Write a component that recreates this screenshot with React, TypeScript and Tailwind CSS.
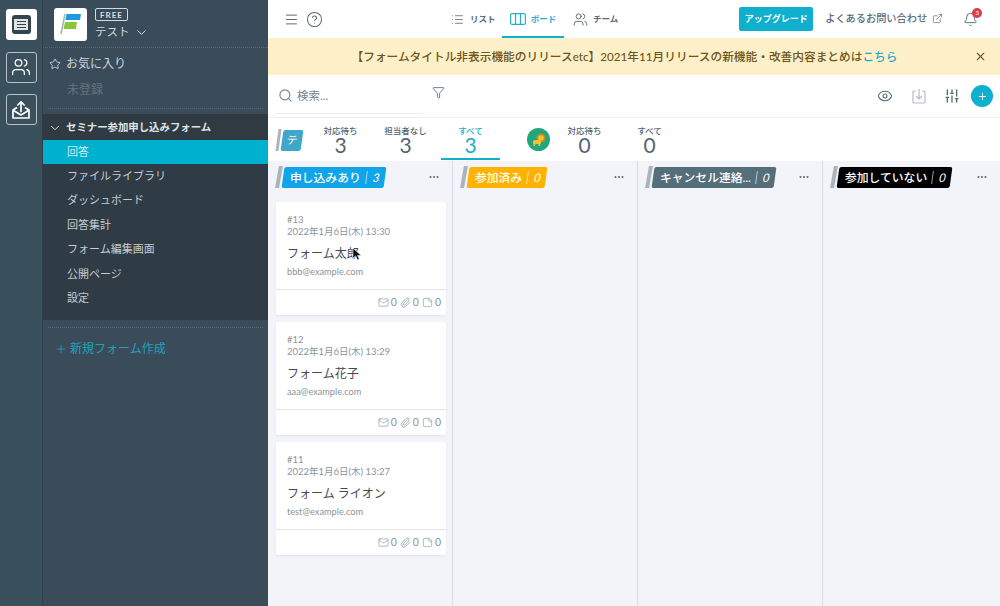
import {
  Bell,
  ChevronDown,
  CircleHelp,
  Ellipsis,
  ExternalLink,
  Eye,
  Filter,
  List,
  Mail,
  Menu,
  Paperclip,
  Plus,
  Search,
  SlidersVertical,
  Star,
  StickyNote,
  Users,
  X,
} from "lucide-react";

const fontStack = "font-['Lato','Noto_Sans_CJK_JP',sans-serif]";

function Logo() {
  return (
    <svg viewBox="0 0 33 33" className="h-[33px] w-[33px]">
      <path d="M7 26 L11 6" stroke="#a9b4ba" strokeWidth="1.6" />
      <path d="M12.5 6 H27 L26 12 H11.5 Z" fill="#1c9be0" />
      <path d="M11 14 H23 L22 21 H9.5 Z" fill="#8cc63f" />
    </svg>
  );
}

function OutboxIcon() {
  return (
    <svg viewBox="0 0 20 20" fill="none" stroke="white" strokeWidth="1.7" className="h-[20px] w-[20px]">
      <path d="M6 7.5 L2 10 V18 H18 V10 L14 7.5" strokeLinejoin="round" />
      <path d="M2.5 10.5 L10 15 L17.5 10.5" strokeLinejoin="round" />
      <path d="M10 11.5 V2 M6.8 5 L10 1.8 L13.2 5" strokeLinecap="round" strokeLinejoin="round" />
    </svg>
  );
}

function Rail() {
  return (
    <div className="flex w-[43px] shrink-0 flex-col items-center gap-[11.5px] border-r border-[#2f3d47] bg-[#3b505d] pt-[9px]">
      <div className="flex h-[31px] w-[31px] items-center justify-center rounded-[3px] bg-white">
        <div className="flex h-[19px] w-[19px] items-center justify-center rounded-[3px] bg-[#33454f]">
          <div className="flex h-[11px] w-[14px] flex-col items-center justify-center gap-[1.5px] bg-[#dfe4e7]">
            <div className="h-[1.5px] w-[9px] bg-[#33454f]" />
            <div className="h-[1.5px] w-[9px] bg-[#33454f]" />
            <div className="h-[1.5px] w-[9px] bg-[#33454f]" />
          </div>
        </div>
      </div>
      <div className="flex h-[31px] w-[31px] items-center justify-center rounded-[3px] border border-[#b8c2c8]">
        <Users size={20} strokeWidth={1.5} className="text-white" />
      </div>
      <div className="flex h-[31px] w-[31px] items-center justify-center rounded-[3px] border border-[#b8c2c8]">
        <OutboxIcon />
      </div>
    </div>
  );
}

const formItems = [
  "ファイルライブラリ",
  "ダッシュボード",
  "回答集計",
  "フォーム編集画面",
  "公開ページ",
  "設定",
];

function Sidebar() {
  return (
    <div className="flex w-[225px] shrink-0 flex-col bg-[#3a4c59]">
      <div className="flex h-[48px] shrink-0 gap-[8px] border-b border-dotted border-[#566772] pl-[11px] pt-[8px]">
        <div className="flex h-[33px] w-[33px] items-center justify-center rounded-[3px] bg-white">
          <Logo />
        </div>
        <div className="flex flex-col items-start">
          <div className="flex h-[13px] w-[33px] items-center justify-center rounded-[2px] border border-[#d4dade] text-[8px] font-bold tracking-[1px] text-[#d9dfe3]">
            FREE
          </div>
          <div className="mt-[1px] flex items-center gap-[4px] text-[11.5px] leading-[20px] text-[#d4dade]">
            テスト
            <ChevronDown size={15} strokeWidth={1.6} />
          </div>
        </div>
      </div>
      <div className="flex h-[60px] shrink-0 flex-col">
        <div className="flex h-[30px] items-center gap-[5px] pl-[6px] pt-[2px] text-[12px] text-[#cfd6da]">
          <Star size={12} strokeWidth={1.8} />
          お気に入り
        </div>
        <div className="pl-[24px] pt-[1px] text-[12px] leading-[22px] text-[#64747e]">未登録</div>
      </div>
      <div className="mx-[5px] h-px shrink-0 border-t border-dotted border-[#566772]" />
      <div className="mt-[5px] flex h-[206px] shrink-0 flex-col bg-[#2f3b45]">
        <div className="flex h-[26px] shrink-0 items-center gap-[4px] bg-[#303a43] pl-[5px] pt-[1px] text-[10.4px] font-bold text-[#dfe4e7]">
          <ChevronDown size={14} strokeWidth={1.6} />
          セミナー参加申し込みフォーム
        </div>
        <div className="flex h-[24px] shrink-0 items-center bg-[#00b0cf] pl-[24px] text-[11px] text-[#c9eef5]">
          回答
        </div>
        {formItems.map((item) => (
          <div key={item} className="flex h-[24.4px] shrink-0 items-center pl-[24px] text-[11px] text-[#c5ccd1]">
            {item}
          </div>
        ))}
      </div>
      <div className="mx-[5px] mt-[7px] h-px shrink-0 border-t border-dotted border-[#566772]" />
      <div className="mt-[12px] flex items-center gap-[3px] pl-[12px] text-[12px] text-[#1ea3bd]">
        <Plus size={12} strokeWidth={1.6} />
        新規フォーム作成
      </div>
    </div>
  );
}

function BoardIcon() {
  return (
    <svg viewBox="0 0 16 12" fill="none" stroke="currentColor" strokeWidth="1.2" className="h-[12px] w-[16px]">
      <rect x="0.6" y="0.6" width="14.8" height="10.8" rx="1.5" />
      <path d="M5.5 0.6 V11.4 M10.5 0.6 V11.4" />
    </svg>
  );
}

function TopBar() {
  return (
    <div className="flex h-[38px] shrink-0 items-center bg-white pl-[16px] text-[#5a6a75]">
      <Menu size={15} strokeWidth={1.6} />
      <CircleHelp size={17} strokeWidth={1.5} className="ml-[7px]" />
      <div className="ml-[128px] flex h-full items-stretch">
        <div className="flex w-[53px] items-center gap-[6px] text-[8.5px] font-bold">
          <List size={13} strokeWidth={1.5} />
          リスト
        </div>
        <div className="ml-[-2px] flex w-[62px] items-center justify-center gap-[5px] border-b-2 border-[#14afcb] pt-[2px] text-[8.5px] font-bold text-[#24b1cd]">
          <BoardIcon />
          ボード
        </div>
        <div className="ml-[9px] flex items-center gap-[5px] text-[8.5px] font-bold">
          <Users size={15} strokeWidth={1.5} />
          チーム
        </div>
      </div>
      <div className="ml-[121px] flex h-[24px] w-[74px] items-center justify-center rounded-[2px] bg-[#0fb0cd] text-[9px] font-bold text-white">
        アップグレード
      </div>
      <div className="ml-[12px] flex items-center gap-[5px] text-[10.2px] font-medium">
        よくあるお問い合わせ
        <ExternalLink size={11} strokeWidth={1.5} />
      </div>
      <div className="relative ml-[20px]">
        <Bell size={15} strokeWidth={1.5} />
        <div className="absolute right-[-4px] top-[-4px] flex h-[10px] w-[10px] items-center justify-center rounded-full bg-[#d8404a] text-[6px] text-white">
          3
        </div>
      </div>
    </div>
  );
}

function Banner() {
  return (
    <div className="relative flex h-[37px] shrink-0 items-center justify-center bg-[#fdf0c8] pr-[19px] text-[11.7px] font-medium text-[#6f5518]">
      <span>
        【フォームタイトル非表示機能のリリースetc】2021年11月リリースの新機能・改善内容まとめは
        <span className="text-[#1fa6c9]">こちら</span>
      </span>
      <X size={13} strokeWidth={2} className="absolute right-[13px] top-[12px] text-[#6a5a30]" />
    </div>
  );
}

function TrayDownIcon() {
  return (
    <svg viewBox="0 0 16 16" fill="none" stroke="#b3bdc4" strokeWidth="1.2" className="h-[16px] w-[16px]">
      <path d="M5 3 H3 Q2 3 2 4 V14 Q2 15 3 15 H13 Q14 15 14 14 V4 Q14 3 13 3 H11" />
      <path d="M8 1 V11 M5 8 L8 11 L11 8" />
    </svg>
  );
}

function Toolbar() {
  return (
    <div className="flex h-[43px] shrink-0 items-center border-b border-[#eef0f3] bg-white pl-[8px] pr-[7px] text-[#5a6a75]">
      <div className="flex h-[35px] w-[147px] items-center gap-[4px] border-b border-[#eceff1] pl-[2px] text-[11.5px] text-[#77838c]">
        <Search size={15} strokeWidth={1.8} />
        検索...
      </div>
      <Filter size={13} strokeWidth={1.6} className="mb-[8px] ml-[9px]" />
      <div className="ml-auto flex items-center">
        <Eye size={16} strokeWidth={1.6} />
        <div className="ml-[18px]">
          <TrayDownIcon />
        </div>
        <SlidersVertical size={16} strokeWidth={2} className="ml-[17px]" />
        <div className="ml-[11px] flex h-[22px] w-[22px] items-center justify-center rounded-full bg-[#0fb0cd] text-white">
          <Plus size={11} strokeWidth={2} />
        </div>
      </div>
    </div>
  );
}

function Stat({ label, value, active }: { label: string; value: number; active?: boolean }) {
  return (
    <div className="flex w-[65px] flex-col items-center">
      <div
        className={`flex h-[42px] w-[59px] flex-col items-center ${
          active ? "border-b-2 border-[#14afcb] text-[#21adc9]" : "text-[#55646f]"
        }`}
      >
        <div className="mt-[8px] whitespace-nowrap text-[8.5px] font-medium leading-[10px]">{label}</div>
        <div className="mt-[-1px] text-[21px] leading-[20px]">{value}</div>
      </div>
    </div>
  );
}

function Lion() {
  return (
    <div className="flex h-[23px] w-[23px] items-center justify-center rounded-full bg-[#23a57f]">
      <svg viewBox="0 0 16 16" className="h-[16px] w-[16px]">
        <circle cx="10" cy="6" r="4.5" fill="#c98a1b" />
        <circle cx="10" cy="6" r="2.8" fill="#f5c332" />
        <rect x="2" y="8" width="8" height="4" rx="1.5" fill="#f5c332" />
        <rect x="2.5" y="11" width="1.6" height="3" fill="#f5c332" />
        <rect x="7.5" y="11" width="1.6" height="3" fill="#f5c332" />
      </svg>
    </div>
  );
}

function StatRow() {
  return (
    <div className="flex h-[43px] shrink-0 items-start bg-white pl-[9px]">
      <div className="mt-[11px] flex items-center gap-[2px]">
        <div className="h-[22px] w-[3px] -skew-x-[8deg] bg-[#aab5bb]" />
        <div className="flex h-[21px] w-[20px] -skew-x-[8deg] items-center justify-center rounded-[2px] bg-[#3fa7c9] text-[11px] text-white">
          テ
        </div>
      </div>
      <div className="ml-[6px] flex">
        <Stat label="対応待ち" value={3} />
        <Stat label="担当者なし" value={3} />
        <Stat label="すべて" value={3} active />
      </div>
      <div className="ml-[24px] mt-[10px]">
        <Lion />
      </div>
      <div className="ml-[2px] flex">
        <Stat label="対応待ち" value={0} />
        <Stat label="すべて" value={0} />
      </div>
    </div>
  );
}

function ColumnTag({ title, count, color }: { title: string; count: number; color: string }) {
  return (
    <div className="flex items-center gap-[2px]">
      <div className="h-[22px] w-[4px] -skew-x-[10deg] bg-[#aab5bb]" />
      <div className={`flex h-[21px] -skew-x-[8deg] items-center rounded-[2px] pl-[7px] pr-[5px] ${color}`}>
        <span className="skew-x-[8deg] whitespace-nowrap text-[11.8px] font-medium text-white">{title}</span>
        <span className="ml-[5px] h-[13px] w-px bg-white/60" />
        <span className="ml-[6px] text-[11.8px] italic text-white">{count}</span>
      </div>
    </div>
  );
}

type Entry = { id: number; time: string; name: string; email: string };

const entries: Entry[] = [
  { id: 13, time: "13:30", name: "フォーム太郎", email: "bbb@example.com" },
  { id: 12, time: "13:29", name: "フォーム花子", email: "aaa@example.com" },
  { id: 11, time: "13:27", name: "フォーム ライオン", email: "test@example.com" },
];

function Card({ entry, cursor }: { entry: Entry; cursor?: boolean }) {
  return (
    <div className="relative flex h-[113px] w-[170px] flex-col rounded-[2px] bg-white shadow-[0_1px_2px_rgba(40,50,70,0.08)]">
      <div className="flex h-[88px] flex-col border-b border-[#e3e5ea] pl-[11px] pt-[12px]">
        <div className="text-[9.5px] leading-[12px] text-[#8a949c]">#{entry.id}</div>
        <div className="text-[9.5px] leading-[12px] text-[#8a949c]">2022年1月6日(木) {entry.time}</div>
        <div className="mt-[7px] text-[12px] leading-[18px] text-[#3f4a53]">{entry.name}</div>
        <div className="mt-[3px] text-[9.2px] leading-[12px] text-[#8a949c]">{entry.email}</div>
      </div>
      <div className="flex flex-1 items-center justify-end gap-[3px] pr-[5px] text-[10.5px] text-[#8a949c]">
        <span className="flex items-center gap-[2px]">
          <Mail size={11} strokeWidth={1.4} />0
        </span>
        <span className="flex items-center gap-[2px]">
          <Paperclip size={11} strokeWidth={1.6} />0
        </span>
        <span className="flex items-center gap-[2px]">
          <StickyNote size={11} strokeWidth={1.4} />0
        </span>
      </div>
      {cursor && (
        <svg viewBox="0 0 12 16" className="absolute left-[76px] top-[45px] h-[15px] w-[11px]">
          <path d="M1 1 V12 L4 9.5 L6 14 L8 13 L6 9 H10 Z" fill="#111" stroke="#fff" strokeWidth="0.6" />
        </svg>
      )}
    </div>
  );
}

function BoardColumn({
  title,
  count,
  color,
  children,
  grow,
}: {
  title: string;
  count: number;
  color: string;
  children?: React.ReactNode;
  grow?: boolean;
}) {
  return (
    <div className={`flex flex-col border-r border-[#d9dce1] pl-[8px] ${grow ? "flex-1 border-r-0" : "w-[185px]"}`}>
      <div className="flex h-[41px] shrink-0 items-start pt-[5px]">
        <div className="ml-[1px]">
          <ColumnTag title={title} count={count} color={color} />
        </div>
        <Ellipsis size={12} strokeWidth={2.2} className="ml-auto mr-[12px] mt-[5px] text-[#5d6a74]" />
      </div>
      <div className="flex flex-col gap-[7px]">{children}</div>
    </div>
  );
}

function Board() {
  return (
    <div className="flex min-h-0 flex-1 bg-[#f3f4f9]">
      <BoardColumn title="申し込みあり" count={3} color="bg-[#10a5e8]">
        {entries.map((entry, i) => (
          <Card key={entry.id} entry={entry} cursor={i === 0} />
        ))}
      </BoardColumn>
      <BoardColumn title="参加済み" count={0} color="bg-[#ffb300]" />
      <BoardColumn title="キャンセル連絡..." count={0} color="bg-[#546e7a]" />
      <BoardColumn title="参加していない" count={0} color="bg-black" grow />
    </div>
  );
}

export default function App() {
  return (
    <div className={`flex h-[606px] w-[1000px] overflow-hidden ${fontStack}`}>
      <Rail />
      <Sidebar />
      <div className="flex min-w-0 flex-1 flex-col">
        <TopBar />
        <Banner />
        <Toolbar />
        <StatRow />
        <Board />
      </div>
    </div>
  );
}
